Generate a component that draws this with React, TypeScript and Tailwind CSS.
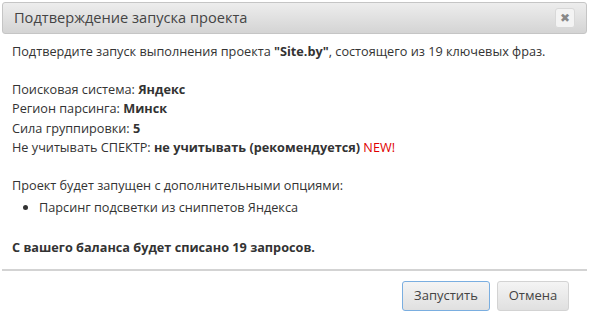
import React from "react";

export default function App() {
  return (
    <div className="w-[589px] h-[323px] bg-white p-[2px] text-[12.7px] leading-[19.5px] text-[#333] overflow-hidden" style={{ fontFamily: '"Open Sans", "DejaVu Sans", sans-serif' }}>
      <div className="flex items-center justify-between h-[32px] px-[11px] border border-[#c5c5c5] rounded-[3px] bg-gradient-to-b from-[#ededed] to-[#d4d4d4]">
        <span className="text-[14.6px] text-[#444]">Подтверждение запуска проекта</span>
        <span className="flex items-center justify-center w-[20px] h-[20px] border border-[#d8d8d8] rounded-[3px] bg-[#f3f3f3] text-[#888] text-[12px] font-bold leading-none">✖</span>
      </div>
      <div className="px-[10px] pt-[8px] pb-[6px]">
        <div>
          Подтвердите запуск выполнения проекта <b>"Site.by"</b>, состоящего из 19 ключевых фраз.
        </div>
        <div className="h-[18px]" />
        <div>Поисковая система: <b>Яндекс</b></div>
        <div>Регион парсинга: <b>Минск</b></div>
        <div>Сила группировки: <b>5</b></div>
        <div>
          Не учитывать СПЕКТР: <b>не учитывать (рекомендуется)</b> <span className="text-[#e00000]">NEW!</span>
        </div>
        <div className="h-[18px]" />
        <div>Проект будет запущен с дополнительными опциями:</div>
        <ul className="list-disc pl-[27px] mt-[3px] mb-[20px]">
          <li>Парсинг подсветки из сниппетов Яндекса</li>
        </ul>
        <div className="font-bold">С вашего баланса будет списано 19 запросов.</div>
      </div>
      <div className="mt-[6px] border-t-[2px] border-[#d3d3d3] flex justify-end gap-[7px] pt-[10px] pr-[18px]">
        <button className="w-[88px] h-[30px] border border-[#7aaee0] rounded-[3px] bg-gradient-to-b from-[#f4f4f4] to-[#e0e0e0] text-[#444] text-[13px]" style={{ fontFamily: '"Open Sans", sans-serif' }}>Запустить</button>
        <button className="w-[72px] h-[30px] border border-[#d3d3d3] rounded-[3px] bg-gradient-to-b from-[#f4f4f4] to-[#e0e0e0] text-[#444] text-[13px]" style={{ fontFamily: '"Open Sans", sans-serif' }}>Отмена</button>
      </div>
    </div>
  );
}
